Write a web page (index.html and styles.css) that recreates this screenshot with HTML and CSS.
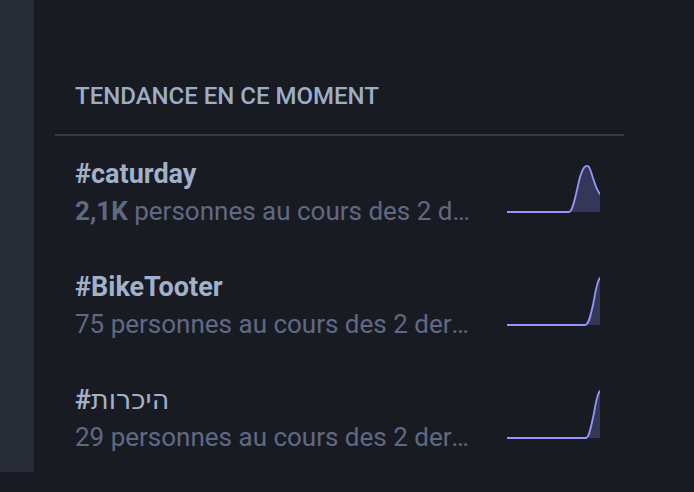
FILE: index.html
```html
<!DOCTYPE html>
<html lang="fr">
<head>
<meta charset="utf-8">
<title>Tendances</title>
<link rel="stylesheet" href="styles.css">
</head>
<body>
<div class="page">
  <aside class="rail"></aside>
  <main class="trends">
    <h4 class="trends-title">Tendance en ce moment</h4>
    <div class="trend">
      <div class="trend-text">
        <a class="trend-name" href="#">#<span>caturday</span></a>
        <div class="trend-desc"><strong>2,1K</strong> personnes au cours des 2 derniers jours</div>
      </div>
      <svg class="spark" width="93" height="50" viewBox="0 0 93 50">
        <path class="spark-fill" d="M0 49 L62 49 C66 49 69 30 73 14 C76 4 79 1 82 4 C85 9 88 26 93 31 L93 49 Z"/>
        <path class="spark-line" d="M0 49 L62 49 C66 49 69 30 73 14 C76 4 79 1 82 4 C85 9 88 26 93 31"/>
      </svg>
    </div>
    <div class="trend">
      <div class="trend-text">
        <a class="trend-name" href="#">#<span>BikeTooter</span></a>
        <div class="trend-desc">75 personnes au cours des 2 derniers jours</div>
      </div>
      <svg class="spark" width="93" height="50" viewBox="0 0 93 50">
        <path class="spark-fill" d="M0 49 L78 49 C82 49 84 38 87 24 C89 12 91 4 93 2 L93 49 Z"/>
        <path class="spark-line" d="M0 49 L78 49 C82 49 84 38 87 24 C89 12 91 4 93 2"/>
      </svg>
    </div>
    <div class="trend">
      <div class="trend-text">
        <a class="trend-name" href="#">#<span class="rtl">היכרות</span></a>
        <div class="trend-desc">29 personnes au cours des 2 derniers jours</div>
      </div>
      <svg class="spark" width="93" height="50" viewBox="0 0 93 50">
        <path class="spark-fill" d="M0 49 L79 49 C82 49 84 38 87 24 C89 12 91 4 93 2 L93 49 Z"/>
        <path class="spark-line" d="M0 49 L79 49 C82 49 84 38 87 24 C89 12 91 4 93 2"/>
      </svg>
    </div>
  </main>
</div>
</body>
</html>
```

FILE: styles.css
```css
html, body {
  margin: 0;
  padding: 0;
  background: #191b22;
  height: 100%;
}

body {
  font-family: Roboto, "Noto Sans", "DejaVu Sans", sans-serif;
  overflow: hidden;
}

.page {
  display: flex;
  align-items: flex-start;
  gap: 21px;
}

.rail {
  width: 34px;
  height: 472px;
  background: #282c37;
  flex: none;
}

.trends {
  width: 569px;
  flex: none;
}

.trends-title {
  margin: 0;
  padding: 78px 20px 20px;
  font-size: 24px;
  line-height: 36px;
  font-weight: 500;
  text-transform: uppercase;
  color: #9baec8;
  border-bottom: 2px solid #363b4a;
}

.trend {
  display: flex;
  align-items: center;
  gap: 37px;
  padding: 20px 24px 20px 20px;
}

.trend-text {
  flex: 1 1 auto;
  min-width: 0;
}

.trend-name {
  display: block;
  font-size: 27px;
  line-height: 36px;
  font-weight: 700;
  color: #a1b1ca;
  text-decoration: none;
  white-space: nowrap;
  overflow: hidden;
  text-overflow: ellipsis;
}

.trend-name .rtl {
  font-weight: 400;
}

.trend-desc {
  font-size: 26px;
  line-height: 36px;
  padding-top: 1px;
  font-weight: 400;
  color: #606984;
  white-space: nowrap;
  overflow: hidden;
  text-overflow: ellipsis;
}

.trend-desc strong {
  font-weight: 700;
}

.spark {
  flex: none;
  display: block;
  margin-bottom: 9px;
}

.spark-fill {
  fill: rgba(140, 141, 255, 0.25);
  stroke: none;
}

.spark-line {
  fill: none;
  stroke: #9495ff;
  stroke-width: 1.8;
  stroke-linecap: round;
  stroke-linejoin: round;
}
```
